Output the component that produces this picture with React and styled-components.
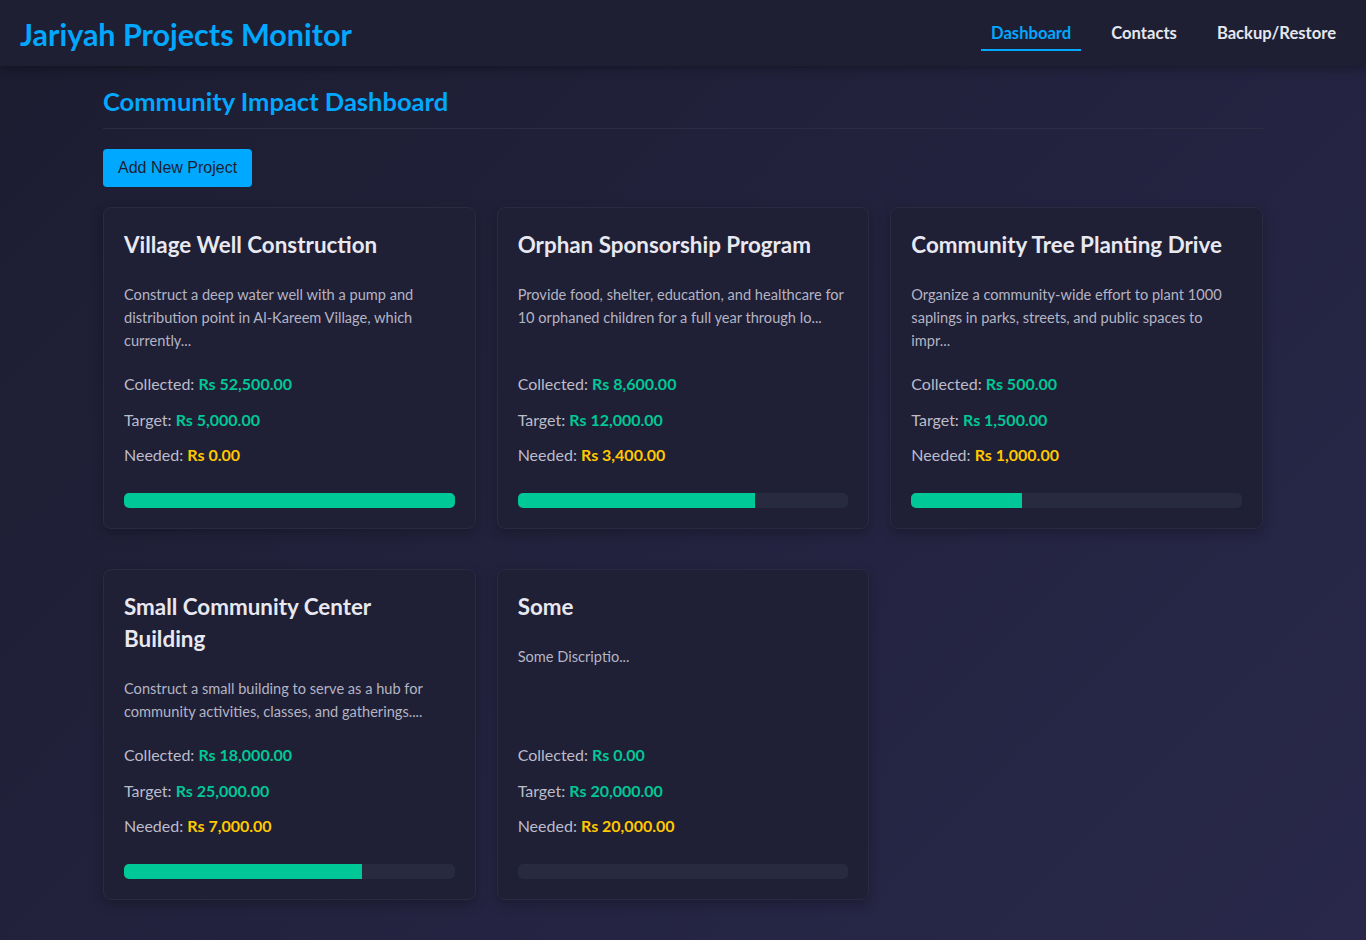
import React from "react";
import styled, { createGlobalStyle } from "styled-components";

const GlobalStyle = createGlobalStyle`
	html, body {
		margin: 0;
		padding: 0;
	}
	body {
		min-height: 100vh;
		background: linear-gradient(135deg, #1c1c30 0%, #232340 55%, #29284a 100%);
		font-family: Lato, "Noto Sans", sans-serif;
		color: #e4e4ec;
	}
	#root {
		min-height: 100vh;
	}
`

const Header = styled.header`
	display: flex;
	align-items: center;
	justify-content: space-between;
	height: 66px;
	padding: 0 20px;
	background: #1e1f33;
	box-shadow: 0 2px 10px rgba(0, 0, 0, 0.35);
	position: relative;
`

const Logo = styled.h1`
	margin: 0;
	padding-top: 2px;
	font-size: 30.5px;
	font-weight: 700;
	color: #00a8ff;
`

const Nav = styled.nav`
	display: flex;
	gap: 20px;
	padding-top: 2px;
`

const NavLink = styled.a`
	padding: 6px 10px;
	font-size: 16.6px;
	font-weight: 700;
	color: ${props => props.active ? '#00a8ff' : '#e6e6ee'};
	border-bottom: 2px solid ${props => props.active ? '#00a8ff' : 'transparent'};
	text-decoration: none;
	cursor: pointer;
`

const Main = styled.main`
	max-width: 1160px;
	margin: 0 auto;
	padding: 20px 0 40px;
`

const PageTitle = styled.h2`
	margin: 0 0 20px;
	padding-bottom: 12px;
	font-size: 25.5px;
	line-height: 30px;
	font-weight: 700;
	color: #00a8ff;
	border-bottom: 1px solid #2c2d45;
`

const AddButton = styled.button`
	display: block;
	padding: 9px 15px;
	height: 38px;
	background: #00a8ff;
	color: #1e1e32;
	border: none;
	border-radius: 4px;
	font-family: "Liberation Sans", Arial, sans-serif;
	font-size: 16px;
	cursor: pointer;
	margin-bottom: 20px;
`

const Grid = styled.div`
	display: grid;
	grid-template-columns: repeat(3, 1fr);
	column-gap: 21px;
	row-gap: 40px;
`

const Card = styled.div`
	display: flex;
	flex-direction: column;
	padding: 21px 20px 20px;
	background: #1f1f35;
	border: 1px solid #2a2b42;
	border-radius: 8px;
	box-shadow: 0 4px 12px rgba(0, 0, 0, 0.25);
`

const CardTitle = styled.h3`
	margin: 0 0 22px;
	font-size: 22.4px;
	line-height: 32px;
	font-weight: 700;
	color: #e8e8f0;
`

const Description = styled.p`
	margin: 0 0 20px;
	flex-grow: 1;
	font-size: 14.6px;
	line-height: 23px;
	color: #b4b4c4;
`

const Stats = styled.div`
	display: flex;
	flex-direction: column;
	gap: 11.5px;
	margin-bottom: 26px;
`

const Stat = styled.div`
	font-size: 16px;
	line-height: 24px;
	color: #bcbccb;
`

const Amount = styled.strong`
	font-weight: 700;
	color: ${props => props.warn ? '#ffc800' : '#00c896'};
`

const Track = styled.div`
	height: 15px;
	border-radius: 5px;
	background: #282a3f;
	overflow: hidden;
`

const Fill = styled.div`
	height: 100%;
	background: #00c896;
`

const projects = [
	{
		title: 'Village Well Construction',
		description: 'Construct a deep water well with a pump and distribution point in Al-Kareem Village, which currently...',
		collected: 52500, target: 5000,
	},
	{
		title: 'Orphan Sponsorship Program',
		description: 'Provide food, shelter, education, and healthcare for 10 orphaned children for a full year through lo...',
		collected: 8600, target: 12000,
	},
	{
		title: 'Community Tree Planting Drive',
		description: 'Organize a community-wide effort to plant 1000 saplings in parks, streets, and public spaces to impr...',
		collected: 500, target: 1500,
	},
	{
		title: 'Small Community Center Building',
		description: 'Construct a small building to serve as a hub for community activities, classes, and gatherings....',
		collected: 18000, target: 25000,
	},
	{
		title: 'Some',
		description: 'Some Discriptio...',
		collected: 0, target: 20000,
	},
]

const money = (n) => `Rs ${n.toLocaleString('en-US', {minimumFractionDigits: 2, maximumFractionDigits: 2})}`

const ProjectCard = ({project}) => {
	const needed = Math.max(project.target - project.collected, 0)
	const pct = Math.min(project.collected / project.target * 100, 100)

	return (
		<Card>
			<CardTitle>{project.title}</CardTitle>
			<Description>{project.description}</Description>
			<Stats>
				<Stat>Collected: <Amount>{money(project.collected)}</Amount></Stat>
				<Stat>Target: <Amount>{money(project.target)}</Amount></Stat>
				<Stat>Needed: <Amount warn>{money(needed)}</Amount></Stat>
			</Stats>
			<Track>
				<Fill style={{width: `${pct}%`}} />
			</Track>
		</Card>
	)
}

const App = () => {
	return (
		<>
			<GlobalStyle />
			<Header>
				<Logo>Jariyah Projects Monitor</Logo>
				<Nav>
					<NavLink active>Dashboard</NavLink>
					<NavLink>Contacts</NavLink>
					<NavLink>Backup/Restore</NavLink>
				</Nav>
			</Header>
			<Main>
				<PageTitle>Community Impact Dashboard</PageTitle>
				<AddButton>Add New Project</AddButton>
				<Grid>
					{projects.map(p => <ProjectCard key={p.title} project={p} />)}
				</Grid>
			</Main>
		</>
	)
}

export default App
